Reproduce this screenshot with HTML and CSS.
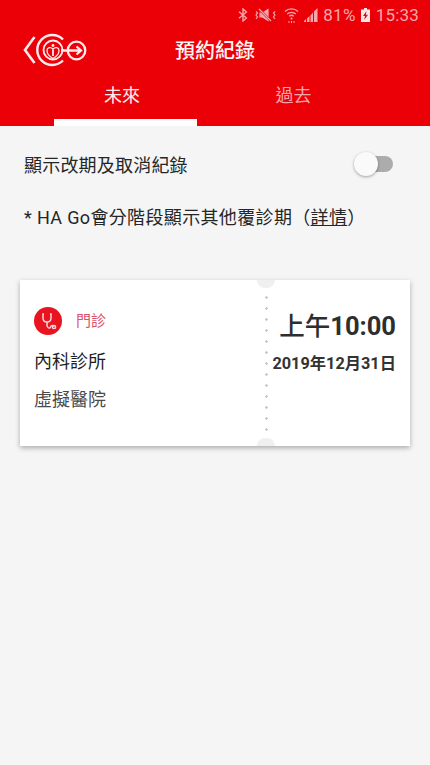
FILE: index.html
```html
<!DOCTYPE html>
<html lang="zh-Hant">
    <head>
        <meta charset="UTF-8" />
        <meta name="viewport" content="width=device-width, initial-scale=1.0" />
        <title>預約紀錄</title>
        <link rel="stylesheet" href="styles.css">
    </head>

    <body>
        <div class="phone">
            <div class="top">
                <div class="statusbar">
                    <svg class="st_icon" width="10" height="14" viewBox="0 0 10 14" fill="none" stroke="#f7a6ab" stroke-width="1.4">
                        <path d="M1 3.8 8.4 10 5 13V1l3.4 3L1 10.200" />
                    </svg>
                    <svg class="st_icon st_mute" width="21" height="14" viewBox="0 0 21 14" fill="none" stroke="#f7a6ab" stroke-width="1.2">
                        <path d="M1 3.500 2.500 5 1 7l1.500 2L1 11" />
                        <path d="M20 3.500 18.500 5 20 7l-1.500 2 1.500 2" />
                        <path d="M5 5h2.500L13 1.500v11L7.500 9H5z" fill="#f7a6ab" />
                        <path d="M4.500 1.500 15.500 12.500" stroke="#eb0008" stroke-width="2.400" />
                        <path d="M4 1 16 13" />
                    </svg>
                    <svg class="st_icon st_wifi" width="15" height="16" viewBox="0 0 15 16" fill="none" stroke="#f7a6ab" stroke-width="1.300">
                        <path d="M1 4.500C4.500 1 10.500 1 14 4.500" />
                        <path d="M3.200 7C5.500 4.700 9.500 4.700 11.800 7" />
                        <path d="M5.300 9.300C6.500 8.100 8.500 8.100 9.700 9.300" />
                        <circle cx="7.500" cy="11.500" r="1" fill="#f7a6ab" stroke="none" />
                        <path d="M5 14v2M7.500 14v2M10 14v2" stroke-width="1" />
                    </svg>
                    <svg class="st_icon" width="14" height="14" viewBox="0 0 14 14" fill="#f7a6ab">
                        <path d="M0 14h2v-3L0 13zM3 14h2.500V8L3 10.500zM6.500 14H9V4.500L6.500 7.500zM10 14h3.500V0L10 3.500z" />
                    </svg>
                    <span class="st_pct">81%</span>
                    <svg class="st_icon" width="9" height="14" viewBox="0 0 9 14">
                        <path d="M3 0h3v1.500h3V14H0V1.500h3z" fill="#fff" opacity="0.9" />
                        <path d="M5.500 3 2 8h2l-.8 4L7 6.800H4.800z" fill="#c9141e" />
                    </svg>
                    <span class="st_time">15:33</span>
                </div>

                <div class="header">
                    <div class="logo">
                        <svg width="66" height="36" viewBox="0 0 66 36" fill="none" stroke="#fdeced" stroke-width="2.200">
                            <path d="M11.500 4 2 17l9.500 13" stroke-width="2.600" />
                            <path d="M40 6.500A15 15 0 1 0 40 27.500" stroke-width="2.400" />
                            <circle cx="30" cy="17" r="9.500" stroke-width="1.800" />
                            <path d="M30 25.500C25.500 23 24 20 24 17.500 24 14.500 27.500 13.500 30 16 32.500 13.500 36 14.500 36 17.500 36 20 34.500 23 30 25.500z" stroke-width="1.300" />
                            <path d="M30 16.500v6.500" stroke-width="1.800" />
                            <circle cx="30" cy="12.500" r="1.400" fill="#fdeced" stroke="none" />
                            <circle cx="53.500" cy="17.500" r="8.800" stroke-width="2.300" />
                            <path d="M38 17.500h20M53.500 13.500l4.500 4-4.500 4" stroke-width="2.300" />
                        </svg>
                    </div>
                    <div class="title">預約紀錄</div>
                </div>

                <div class="tabs">
                    <div class="tab tab_on">未來</div>
                    <div class="tab">過去</div>
                </div>
            </div>

            <div class="content">
                <div class="switch_row">
                    <span>顯示改期及取消紀錄</span>
                    <div class="switch">
                        <div class="switch_thumb"></div>
                    </div>
                </div>
                <p class="note">* HA Go會分階段顯示其他覆診期（<u>詳情</u>）</p>

                <div class="card">
                    <div class="card_left">
                        <div class="kind">
                            <div class="kind_icon">
                                <svg width="18" height="19" viewBox="0 0 18 19" fill="none" stroke="#f8d5d7" stroke-width="1.500">
                                    <path d="M5 2H4V6C4 8.800 6 10 8 10S12 8.800 12 6V2H11" />
                                    <path d="M8 10V13C8 16.500 11 16.500 11.500 15S13.500 13 15 14.500" />
                                    <circle cx="15" cy="15" r="1.600" />
                                </svg>
                            </div>
                            <span class="kind_text">門診</span>
                        </div>
                        <div class="clinic">內科診所</div>
                        <div class="hospital">虛擬醫院</div>
                    </div>
                    <div class="card_right">
                        <div class="time"><span class="time_ampm">上午</span>10:00</div>
                        <div class="date">2019年12月31日</div>
                    </div>
                    <div class="notch notch_top"></div>
                    <div class="notch notch_bottom"></div>
                </div>
            </div>
        </div>
    </body>
</html>
```

FILE: styles.css
```css
* {
    box-sizing: border-box;
}

body {
    margin: 0;
    background-color: #f5f5f5;
    font-family: Roboto, "Noto Sans CJK TC", sans-serif;
    color: #262626;
}

.phone {
    width: 430px;
    height: 765px;
    overflow: hidden;
    display: flex;
    flex-direction: column;
}

.top {
    height: 126px;
    background-color: #eb0008;
    display: flex;
    flex-direction: column;
}

.statusbar {
    height: 30px;
    padding-right: 11px;
    display: flex;
    justify-content: flex-end;
    align-items: center;
    color: #f7a6ab;
    font-size: 17px;
    gap: 5px;
}
.st_mute {
    margin-left: 2px;
}
.st_wifi {
    margin-left: 3px;
}
.st_pct {
    letter-spacing: 0.3px;
}
.st_time {
    font-size: 17px;
    margin-left: 1px;
    letter-spacing: 0.2px;
}

.header {
    height: 44px;
    padding-bottom: 6px;
    position: relative;
    display: flex;
    justify-content: center;
    align-items: center;
}
.logo {
    position: absolute;
    left: 23px;
    top: 3px;
    height: 36px;
}
.title {
    color: #fff5f5;
    font-size: 20px;
    font-weight: 500;
}

.tabs {
    flex: 1;
    display: flex;
    gap: 25px;
    padding-left: 54px;
}
.tab {
    width: 143px;
    padding-top: 7px;
    text-align: center;
    font-size: 18px;
    color: #f7a6ab;
}
.tab_on {
    padding-right: 7px;
    color: #fdecec;
    border-bottom: 7px solid #fff;
}

.content {
    flex: 1;
    padding: 0 20px;
}

.switch_row {
    height: 80px;
    padding: 0 17px 4px 4px;
    display: flex;
    justify-content: space-between;
    align-items: center;
    font-size: 18px;
    letter-spacing: 0.2px;
}

.switch {
    width: 28px;
    height: 16px;
    border-radius: 8px;
    background-color: #acacac;
    position: relative;
}
.switch_thumb {
    position: absolute;
    left: -11px;
    top: -4px;
    width: 24px;
    height: 24px;
    border-radius: 50%;
    background-color: #fafafa;
    box-shadow: 0 1px 3px rgb(0 0 0 / 0.35);
}

.note {
    margin: 0 0 0 4px;
    height: 74px;
    font-size: 18px;
    line-height: 24px;
    letter-spacing: 0.35px;
}

.card {
    height: 166px;
    background-color: #fff;
    box-shadow: 0 2px 5px rgb(0 0 0 / 0.3);
    display: flex;
    position: relative;
}

.card_left {
    width: 248px;
    margin: 12px 0;
    padding: 15px 0 0 14px;
    background: radial-gradient(circle, #c8c8c8 1px, transparent 1.5px) right top / 3px 11px repeat-y;
}

.kind {
    display: flex;
    align-items: center;
    gap: 14px;
    color: #d9536b;
    font-size: 15px;
}
.kind_text {
    padding-bottom: 4px;
}
.kind_icon {
    width: 28px;
    height: 28px;
    border-radius: 50%;
    background-color: #e8141f;
    display: flex;
    justify-content: center;
    align-items: center;
}

.clinic {
    margin-top: 14px;
    font-size: 18px;
    line-height: 26px;
    color: #1e1e1e;
}
.hospital {
    margin-top: 12px;
    font-size: 18px;
    line-height: 26px;
    color: #4a4a4a;
}

.card_right {
    flex: 1;
    padding: 29px 14px 0 0;
    text-align: right;
}
.time {
    font-size: 25.500px;
    line-height: 34px;
    font-weight: 700;
    color: #2e2e2e;
}
.time_ampm {
    font-weight: 500;
}
.date {
    margin-top: 9px;
    font-size: 16.300px;
    line-height: 24px;
    font-weight: 700;
    color: #333;
}

.notch {
    position: absolute;
    left: 237px;
    width: 18px;
    height: 8px;
    background-color: #f0f0f0;
}
.notch_top {
    top: 0;
    border-radius: 0 0 9px 9px;
}
.notch_bottom {
    bottom: 0;
    border-radius: 9px 9px 0 0;
}
```
